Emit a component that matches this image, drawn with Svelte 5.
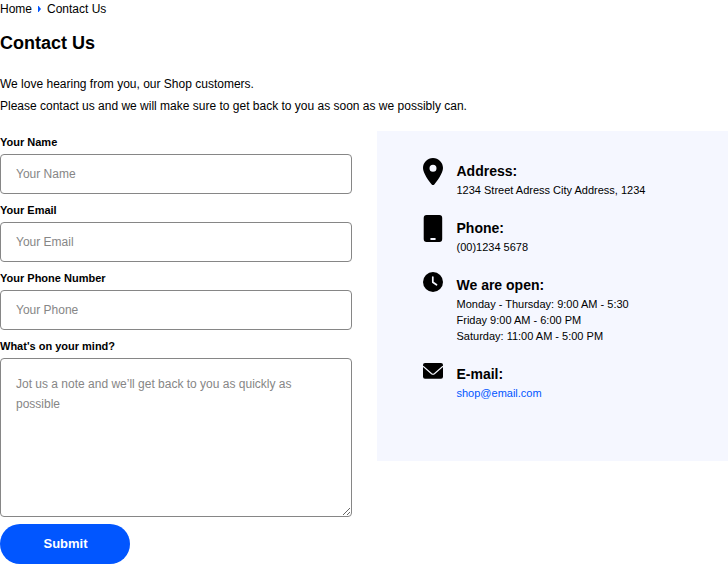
<script>
  const fields = [
    { id: 'name', label: 'Your Name', placeholder: 'Your Name', type: 'text' },
    { id: 'email', label: 'Your Email', placeholder: 'Your Email', type: 'email' },
    { id: 'phone', label: 'Your Phone Number', placeholder: 'Your Phone', type: 'tel' }
  ];
</script>

<main>
  <nav><a href="#home">Home</a><svg width="3" height="6" viewBox="0 0 3 6"><path d="M0 0H0.600L3 3L0.600 6H0Z" fill="#0156ff" /></svg><span>Contact Us</span></nav>
  <h1>Contact Us</h1>
  <p class="intro">We love hearing from you, our Shop customers.<br />Please contact us and we will make sure to get back to you as soon as we possibly can.</p>
  <div class="columns">
    <form onsubmit={(e) => e.preventDefault()}>
      {#each fields as f}
        <label for={f.id}>{f.label}</label>
        <input id={f.id} type={f.type} placeholder={f.placeholder} />
      {/each}
      <label for="note">What's on your mind?</label>
      <textarea id="note" placeholder="Jot us a note and we’ll get back to you as quickly as possible"></textarea>
      <button>Submit</button>
    </form>
    <aside>
      <section>
        <svg width="20" height="27" viewBox="0 0 20 27"><path fill-rule="evenodd" d="M10 0C4.500 0 0 4.500 0 10C0 15 6 23.500 8.700 26.400Q10 27.600 11.300 26.400C14 23.500 20 15 20 10C20 4.500 15.500 0 10 0ZM10 6.700A3.500 3.500 0 1 1 10 13.700A3.500 3.500 0 1 1 10 6.700Z" /></svg>
        <div><h2>Address:</h2><p>1234 Street Adress City Address, 1234</p></div>
      </section>
      <section>
        <svg width="20" height="27" viewBox="0 0 20 27"><path fill-rule="evenodd" d="M3.600 0H16.400Q19.200 0 19.200 3V24Q19.200 27 16.400 27H3.600Q0.700 27 0.700 24V3Q0.700 0 3.600 0ZM8.200 23Q7.200 23 7.200 24T8.200 25H11.800Q12.800 25 12.800 24T11.800 23Z" /></svg>
        <div><h2>Phone:</h2><p>(00)1234 5678</p></div>
      </section>
      <section>
        <svg width="20" height="20" viewBox="0 0 20 20"><circle cx="10" cy="10" r="10" /><path d="M9.800 5V10.200L13.500 12.800" fill="none" stroke="#f5f7ff" stroke-width="1.700" stroke-linecap="round" stroke-linejoin="round" /></svg>
        <div><h2>We are open:</h2><p>Monday - Thursday: 9:00 AM - 5:30<br />Friday 9:00 AM - 6:00 PM<br />Saturday: 11:00 AM - 5:00 PM</p></div>
      </section>
      <section>
        <svg class="mail" width="20" height="16" viewBox="0 0 20 16"><rect width="20" height="15.700" rx="2" /><path d="M0 3.300L8.600 10.700Q10 11.800 11.400 10.700L20 3.300" fill="none" stroke="#f5f7ff" stroke-width="1.200" /></svg>
        <div><h2>E-mail:</h2><p><a href="mailto:shop@email.com">shop@email.com</a></p></div>
      </section>
    </aside>
  </div>
</main>

<style>
  :global(body) { background: #fff; overflow: hidden; }
  main { width: 728px; height: 564px; overflow: hidden; font-family: "Liberation Sans", Arial, sans-serif; color: #000; }
  * { box-sizing: border-box; }
  nav { display: flex; align-items: center; height: 18px; font-size: 12px; line-height: 18px; }
  nav svg { margin: 0 6px 0 6px; }
  nav a { color: inherit; text-decoration: none; }
  h1 { margin: 12px 0 0; font-size: 18px; line-height: 27px; font-weight: 700; }
  .intro { margin: 16px 0 0; font-size: 12px; line-height: 22px; }
  .columns { display: flex; gap: 25px; align-items: flex-start; margin-top: 14px; }
  form { width: 352px; display: flex; flex-direction: column; }
  label { font-size: 11px; line-height: 16px; font-weight: 700; margin: 3px 0 4px; }
  input, textarea { width: 352px; border: 1px solid #868686; border-radius: 4px; padding: 0 15px; font: 12px/20px "Liberation Sans", Arial, sans-serif; background: #fff; outline: 0; margin: 0; }
  input { height: 40px; margin-bottom: 5px; }
  textarea { height: 159px; padding-top: 15px; }
  input::placeholder, textarea::placeholder { color: #868686; opacity: 1; }
  button { width: 130px; height: 40px; margin-top: 7px; padding: 0 0 1px 1px; border: 0; border-radius: 20px; background: #0156ff; color: #fff; font: 700 13px/20px "Liberation Sans", Arial, sans-serif; }
  aside { width: 351px; height: 330px; background: #f5f7ff; padding: 27px 46px; }
  section { display: flex; gap: 13.500px; margin-bottom: 17px; }
  section svg { flex: none; }
  .mail { margin-top: 2px; }
  section > div { padding-top: 5px; }
  h2 { font-size: 14px; line-height: 17px; font-weight: 700; margin: 0 0 2px; }
  section p { margin: 0; font-size: 11px; line-height: 16px; }
  section a { color: #0156ff; text-decoration: none; }
</style>
